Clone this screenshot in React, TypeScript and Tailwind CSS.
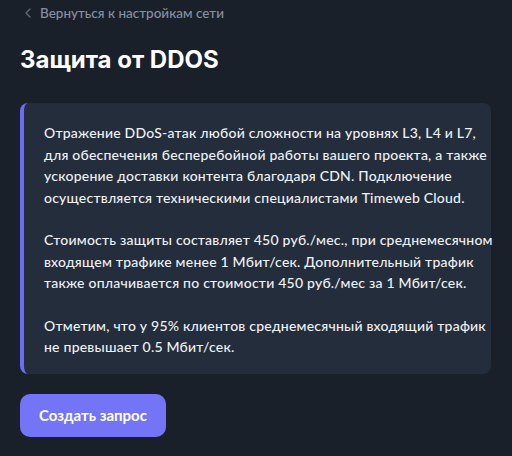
import React from 'react';
import { ChevronLeft } from 'lucide-react';

const paragraphs = [
  [
    'Отражение DDoS-атак любой сложности на уровнях L3, L4 и L7,',
    'для обеспечения бесперебойной работы вашего проекта, а также',
    'ускорение доставки контента благодаря CDN. Подключение',
    'осуществляется техническими специалистами Timeweb Cloud.',
  ],
  [
    'Стоимость защиты составляет 450 руб./мес., при среднемесячном',
    'входящем трафике менее 1 Мбит/сек. Дополнительный трафик',
    'также оплачивается по стоимости 450 руб./мес за 1 Мбит/сек.',
  ],
  [
    'Отметим, что у 95% клиентов среднемесячный входящий трафик',
    'не превышает 0.5 Мбит/сек.',
  ],
];

export default function App() {
  return (
    <div className="w-[512px] h-[456px] overflow-hidden bg-[#1a202a] px-5 font-['Lato',sans-serif]">
      {/* Back link */}
      <button className="flex items-center gap-[4px] pt-[3px] text-[13.5px] leading-[20px] text-[#8691a3]">
        <ChevronLeft className="w-4 h-4 text-[#5f6878]" strokeWidth={2} />
        <span className="font-medium">Вернуться к настройкам сети</span>
      </button>

      <h1 className="mt-[21px] font-['Inter',sans-serif] text-[24px] leading-[32px] font-bold text-white">
        Защита от DDOS
      </h1>

      {/* Info card */}
      <div className="mt-[27px] w-[471px] rounded-lg border-l-4 border-[#6e6cf4] bg-[#232d3c] pl-5 pr-4 pt-[19px] pb-[16px]">
        <div className="flex flex-col gap-[21px] text-[14px] leading-[21.5px] font-medium tracking-[0.22px] text-[#eef1f5]">
          {paragraphs.map((lines, i) => (
            <p key={i}>
              {lines.map((l, j) => (
                <span key={j} className="block whitespace-nowrap">{l}</span>
              ))}
            </p>
          ))}
        </div>
      </div>

      <button className="mt-5 h-[43px] w-[146px] rounded-[10px] bg-[#7474f6] text-[15px] font-bold text-white">
        Создать запрос
      </button>
    </div>
  );
}
